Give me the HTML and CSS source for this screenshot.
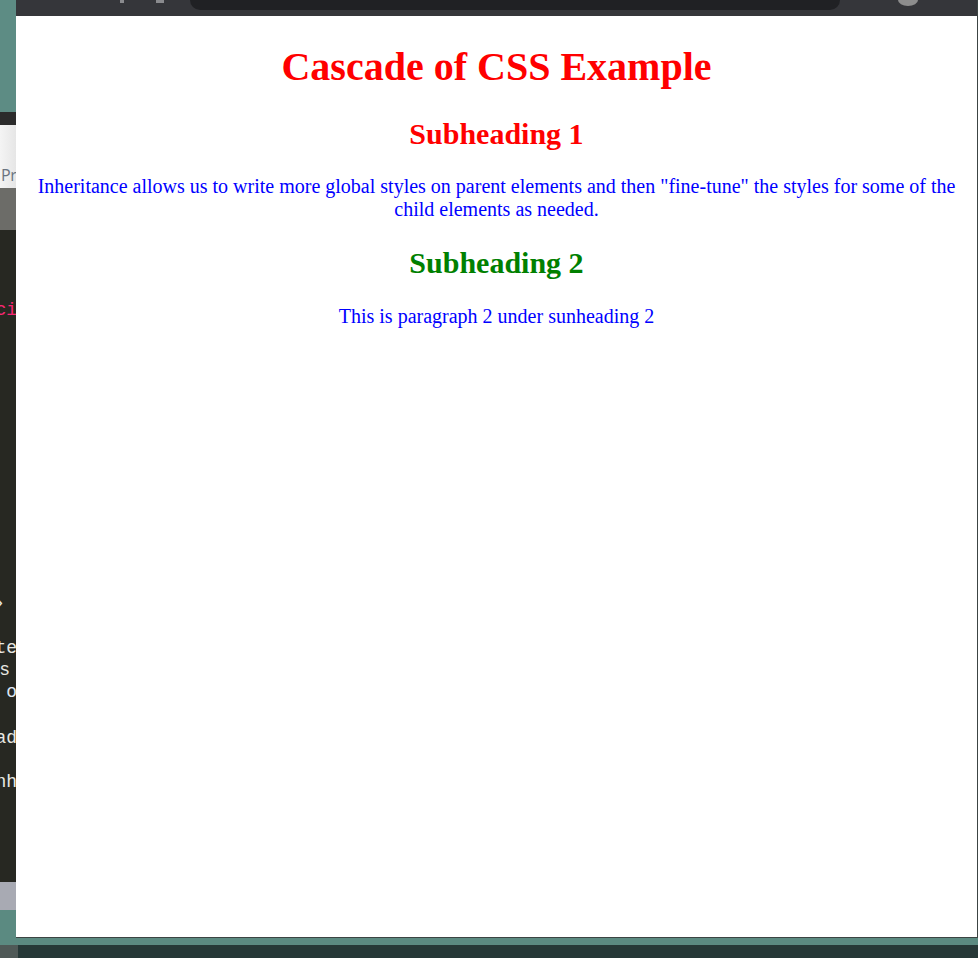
FILE: index.html
```html
<!DOCTYPE html>
<html>
<head>
<meta charset="utf-8">
<title>Cascade of CSS Example</title>
<link rel="stylesheet" href="styles.css">
</head>
<body>
<div class="desktop">
  <div class="behind">
    <div class="seg seg-teal"></div>
    <div class="seg seg-dark"></div>
    <div class="seg seg-light"><span class="pr">Pr</span></div>
    <div class="seg seg-grey"></div>
    <div class="seg seg-editor">
      <span class="code pink l1">ci</span>
      <span class="code white l2">›</span>
      <span class="code white l3">te</span>
      <span class="code white l4">s</span>
      <span class="code white l5">o</span>
      <span class="code white l6">ad</span>
      <span class="code white l7">nh</span>
    </div>
    <div class="seg seg-status"></div>
  </div>
  <div class="browser">
    <div class="topbar">
      <span class="tb-icon i1"></span>
      <span class="tb-icon i2"></span>
      <div class="omnibox"></div>
      <span class="avatar"></span>
    </div>
    <div class="viewport">
      <div class="page">
        <h1 class="title">Cascade of CSS Example</h1>
        <h2 class="sub sub-red">Subheading 1</h2>
        <p class="para">Inheritance allows us to write more global styles on parent elements and then "fine-tune" the styles for some of the child elements as needed.</p>
        <h2 class="sub sub-green">Subheading 2</h2>
        <p class="para">This is paragraph 2 under sunheading 2</p>
      </div>
    </div>
  </div>
  <div class="rightstrip"></div>
</div>
<div class="taskbar"><span class="task-start"></span></div>
</body>
</html>
```

FILE: styles.css
```css
* { box-sizing: border-box; }
html, body { margin: 0; padding: 0; }
body {
  width: 978px;
  height: 958px;
  overflow: hidden;
  background: #5b8a81;
  display: flex;
  flex-direction: column;
}
.desktop {
  height: 945px;
  display: flex;
  align-items: flex-start;
}
.behind {
  width: 16px;
  height: 945px;
  display: flex;
  flex-direction: column;
  flex: none;
}
.seg { width: 16px; overflow: hidden; }
.seg-teal { height: 112px; background: #5d8c84; }
.seg-dark { height: 13px; background: #2b2b2b; }
.seg-light {
  height: 63px;
  background: linear-gradient(90deg, #f4f4f4, #e6e6e6);
  display: flex;
  align-items: flex-end;
  justify-content: flex-start;
  padding-bottom: 2px;
  padding-left: 1px;
}
.pr {
  font-family: "Open Sans", "Noto Sans", sans-serif;
  font-size: 16px;
  line-height: 22px;
  color: #6a7380;
  white-space: nowrap;
  letter-spacing: -0.5px;
}
.seg-grey { height: 42px; background: #6c6c68; }
.seg-editor {
  height: 652px;
  background: #272822;
  display: flex;
  flex-direction: column;
  align-items: flex-end;
}
.code {
  font-family: "Liberation Mono", "DejaVu Sans Mono", monospace;
  font-size: 18px;
  line-height: 22px;
  white-space: nowrap;
  margin-right: -1px;
}
.pink { color: #f92672; }
.white { color: #e8e8e2; }
.l1 { margin-top: 69px; }
.l2 { margin-top: 271px; margin-right: 11px; }
.l3 { margin-top: 23px; }
.l4 { margin-right: 6px; }
.l5 { color: #dfe6f2; }
.l6 { margin-top: 24px; }
.l7 { margin-top: 22px; }
.seg-status { height: 28px; background: #a8aab3; }

.browser {
  width: 962px;
  height: 938px;
  flex: none;
  display: flex;
  flex-direction: column;
  border-bottom: 1px solid #3c4443;
  border-right: 1px solid #3c4443;
}
.topbar {
  height: 16px;
  background: #35363a;
  position: relative;
  flex: none;
}
.omnibox {
  position: absolute;
  left: 174px;
  top: 0;
  width: 650px;
  height: 10px;
  background: #202124;
  border-radius: 0 0 10px 10px;
}
.tb-icon {
  position: absolute;
  top: 0;
  width: 8px;
  height: 3px;
  background: #8a8b8e;
}
.i1 { left: 104px; width: 4px; }
.i2 { left: 140px; }
.avatar {
  position: absolute;
  left: 882px;
  top: -6px;
  width: 20px;
  height: 12px;
  border-radius: 50%;
  background: #8d8d8d;
}
.viewport {
  flex: 1;
  background: #ffffff;
  overflow: hidden;
}
.page {
  padding: 0 10px;
  text-align: center;
  font-family: "Liberation Serif", "Times New Roman", serif;
  color: #0000ff;
  font-size: 20px;
}
.title {
  color: #ff0000;
  font-size: 40px;
  margin: 26.8px 0;
  font-weight: bold;
}
.sub {
  font-size: 30px;
  margin: 24.9px 0;
  font-weight: bold;
}
.sub-red { color: #ff0000; }
.sub-green { color: #008000; }
.para {
  margin: 20px 0;
  font-size: 20px;
}
.rightstrip {
  width: 1px;
  height: 945px;
  background: linear-gradient(180deg, #5d8c84 0 40%, #2e3f66 40% 55%, #c9a55e 55% 60%, #2b5e9a 60% 70%, #cfcfcf 70% 85%, #a11c2a 85% 88%, #5d8c84 88%);
  flex: none;
}
.taskbar {
  height: 13px;
  background: #263837;
  display: flex;
}
.task-start {
  width: 18px;
  height: 13px;
  background: #4f5957;
}
```
